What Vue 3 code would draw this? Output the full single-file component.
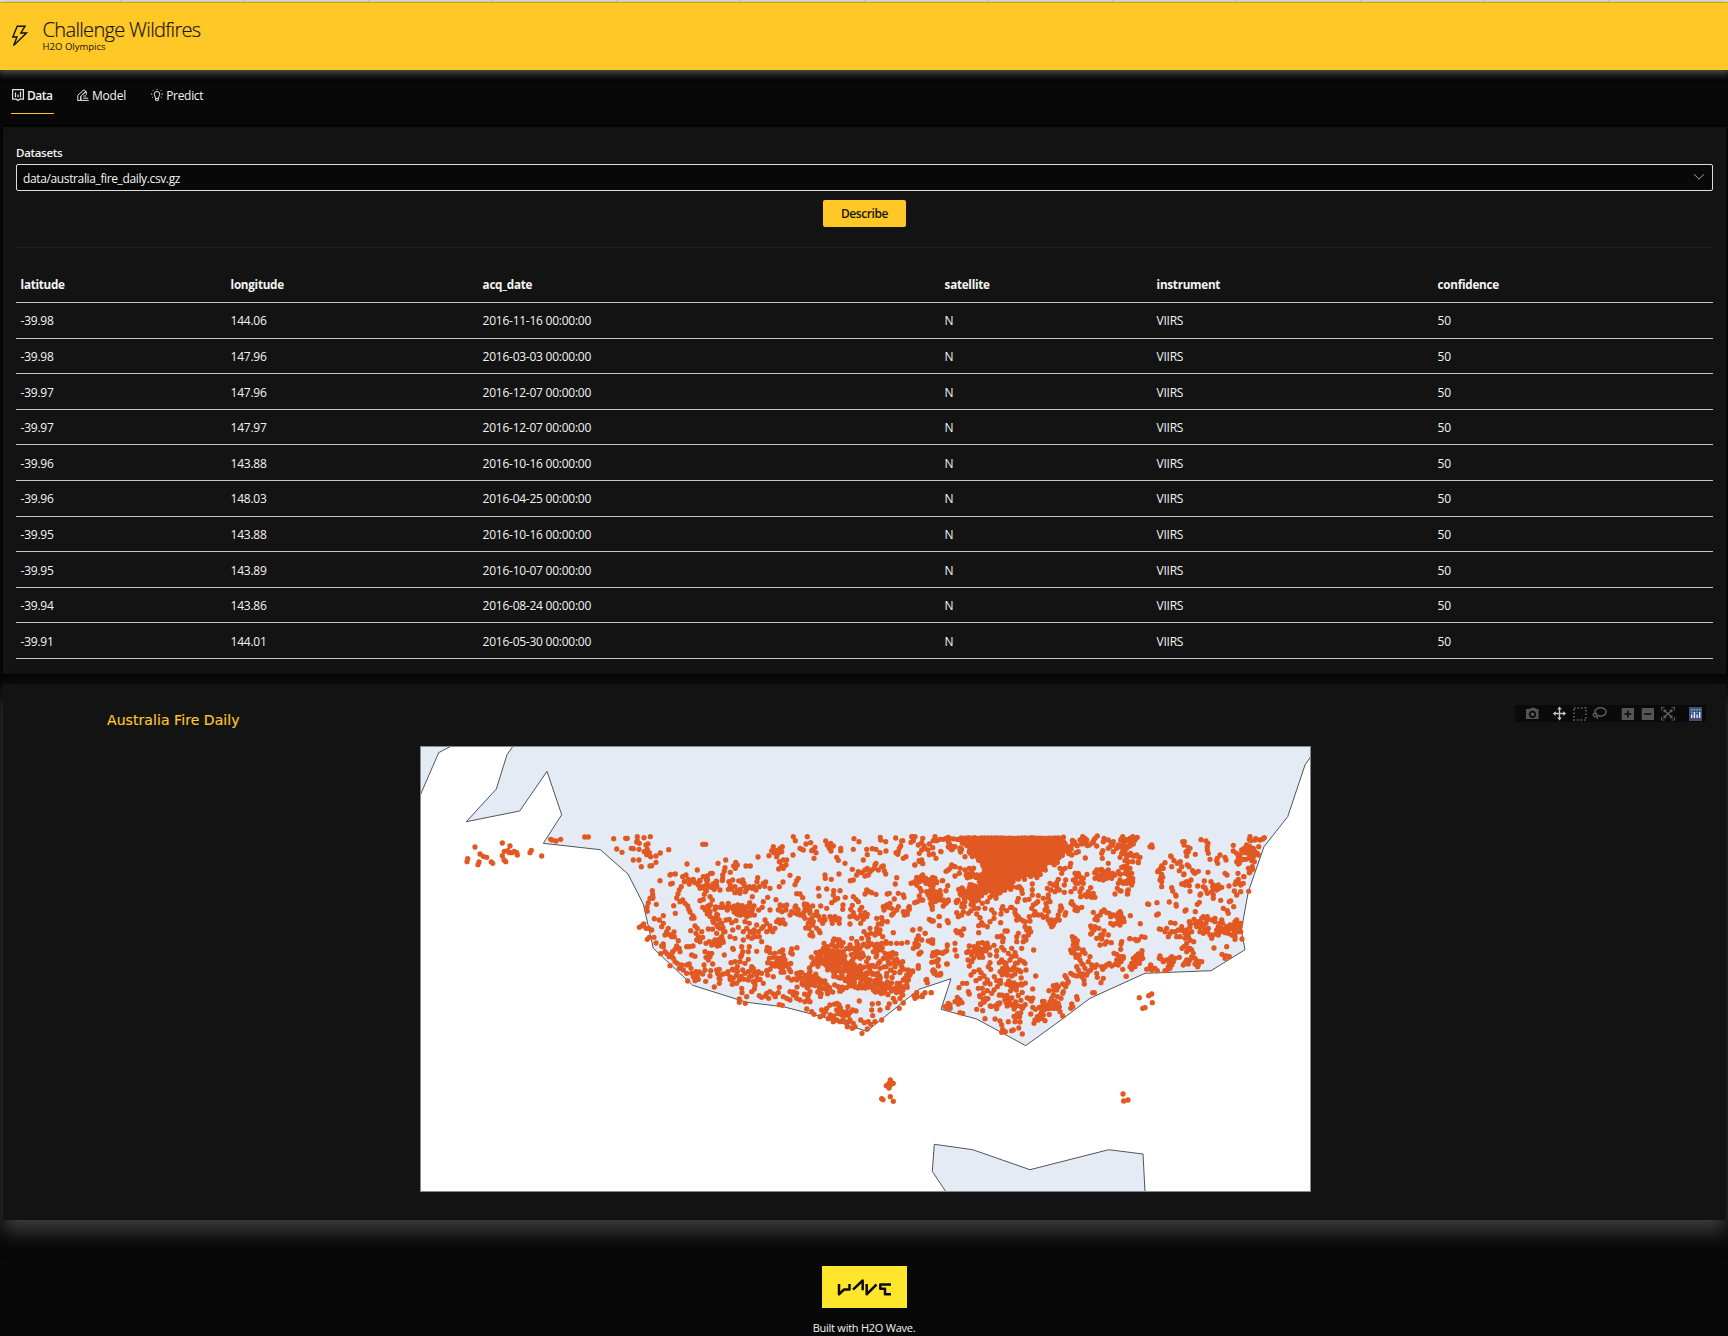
<script setup>
const tabs = [
  { name: 'Data', icon: 'data', active: true },
  { name: 'Model', icon: 'model' },
  { name: 'Predict', icon: 'predict' },
]
const columns = ['latitude', 'longitude', 'acq_date', 'satellite', 'instrument', 'confidence']
const rows = [
  ['-39.98', '144.06', '2016-11-16'],
  ['-39.98', '147.96', '2016-03-03'],
  ['-39.97', '147.96', '2016-12-07'],
  ['-39.97', '147.97', '2016-12-07'],
  ['-39.96', '143.88', '2016-10-16'],
  ['-39.96', '148.03', '2016-04-25'],
  ['-39.95', '143.88', '2016-10-16'],
  ['-39.95', '143.89', '2016-10-07'],
  ['-39.94', '143.86', '2016-08-24'],
  ['-39.91', '144.01', '2016-05-30'],
].map(([lat, lon, day]) => [lat, lon, `${day} 00:00:00`, 'N', 'VIIRS', '50'])

// Fire sites, grouped by map sector: each sector has an origin and positions in thirds of a pixel.
const sectors = [
  { x: 420, y: 740, p: `165,321 247,309 270,318 180,342 190,349 200,352 143,356 141,365 177,366 174,374 214,366 218,370 247,347 253,334 263,332 268,338 275,338 283,334 290,338 292,345 252,360 257,365 334,331 330,338 365,348 392,298 396,300 408,303 422,298 494,291 505,291 581,296 590,327 606,337` },
  { x: 620, y: 820, p: `6,97 17,55 22,55 34,85 40,86 40,120 52,50 52,62 58,70 72,53 91,50 78,75 84,72 57,88 50,66 57,120 64,140 73,95 82,88 80,104 88,98 92,110 108,108 121,99 108,127 95,137 90,138 146,89 248,73 257,73 201,132 120,182 153,163 166,162 150,165 157,190 152,192 232,150
188,170 198,165 193,185 205,178 212,183 220,178 225,188 208,192 184,200 178,210 174,222 170,234 180,245 188,240 195,250 203,258 206,268 210,276 219,288 215,295 222,294 161,257 166,280
240,183 250,170 262,168 272,160 277,160 235,195 240,205 248,200 255,208 262,192 268,200 276,203 283,208 290,198 300,210 294,130 317,120 315,143 313,153 308,165 308,175 290,185 331,157 341,138 347,127 352,135 346,145 378,138 391,138 414,111 338,180 345,200 352,212 361,208 368,180 372,190 373,198 380,208 388,200 396,205 402,200 413,173 411,185 418,200 408,210 430,190 437,186 434,199 450,205 397,230 345,218 360,220 376,215 325,208
240,242 250,238 253,223 259,213 270,230 277,240 248,262 256,270 262,260 262,282 270,275 285,268 290,262 300,262 308,262 322,270 325,250 330,262 340,262 345,270 352,265 360,258 365,270 372,262 380,275 385,260 395,270 350,282 362,285 372,282 380,290 390,280 402,258 416,270 427,262 430,245 443,232 450,270 468,239 475,270 290,283 283,295 298,300 305,310 290,315 300,325 318,300 328,298 335,308 348,302 355,322 338,330 375,305 388,310 380,325 370,335 390,335 400,340 395,355 385,350 370,360 345,355 330,350 315,335 305,350 290,340
97,212 98,223 90,235 98,235 99,232 81,261 82,274 85,248 109,253 58,322 65,318 71,312 78,325 86,325 95,330 103,296 118,300 130,287 130,310 125,320 145,325 140,335 150,345 135,345 162,336 163,350 155,350 82,358 88,352 102,352 108,369 125,378 130,372 122,401 130,380 135,395 142,402 148,410 155,405 160,415 158,395 150,437 175,362 170,378 165,388 178,385 180,395 200,380 208,380 219,378 215,405 225,409 165,425 172,430 185,435 178,445 190,450 200,435 208,432 213,445 215,460 220,470 225,482 235,478 203,483 200,460 238,456 232,468 228,455 212,332 228,340 235,350 230,360 240,365 232,325 225,318 248,352 265,327 245,335 258,370 268,365 275,375 285,372 292,375 285,360 296,362 255,395 265,400 270,410 258,412 265,420 278,432 275,400 292,378 313,405 252,435 255,450 248,462 272,452 270,468 257,484 290,450 298,448 295,462 300,478 283,501 298,490 310,462 320,460 330,470 340,475 338,385 340,388 365,380 368,395 365,405 388,380 385,395 410,394 362,410 360,425 375,430 385,418 333,428 345,425 352,440 340,450 368,450 375,460 395,440 400,445 385,455 395,468 360,475 350,490 342,490 358,480 366,518 365,505 385,480 400,485 410,465 410,480 415,455 425,460 420,478 430,490 443,465 440,452 450,448 460,470 376,550 358,537 358,547 380,530 395,515 403,507 405,495 418,527 425,532 440,520 436,528 450,515 446,535 460,522 466,530 478,502 475,518 478,554 487,556
520,50 526,62 562,50 558,72 545,88 550,90 540,85 572,68 585,82 578,90 588,98 582,115 575,92 519,105 617,63 622,75 632,70 628,85 640,78 633,93 662,85 662,92 650,112 655,121 702,56 717,65 700,88 740,88 742,104 757,86 768,88 781,52 782,60 797,65 780,98 798,93 730,120 827,54 845,63 842,78 838,85 835,95 828,98 833,103 850,115 858,110 876,50 880,60 885,50 873,67 895,75 905,68 912,78 905,90 898,100 905,120 897,122 908,131 885,135 928,104 938,83 945,50 940,62 960,58 978,55 985,65 985,80 962,94
460,80 470,92 480,85 475,100 462,98 455,92 487,80 485,95 470,110 447,107 478,125 490,120 485,138 498,135 490,145 476,147 500,120 615,165 616,175 634,178 657,162 675,130 510,166 535,175 530,182 525,194 489,186 478,200 530,221 540,222 548,233 595,205 620,207 597,228 641,212 640,225 635,248 645,240 653,235 660,212 676,232 697,148 710,165 715,155 725,158 735,150 742,145 750,155 745,165 735,168 755,150 762,145 765,135 768,130 775,150 785,140 790,138 793,152 797,162 700,180 691,182 830,173 826,192 740,210 735,222 748,215 755,218 768,223 700,230 708,238 715,245 697,256 669,255 668,268 873,190 880,188 890,195 903,170 898,185 900,205 912,182 918,175 930,180 938,172 950,185 942,190 930,195 967,182 978,154 985,150 983,197
480,255 490,258 500,255 498,270 478,270 486,275 510,285 515,275 525,262 527,258 532,282 540,285 548,280 555,270 552,290 560,270 565,260 570,280 575,295 580,305 570,300 578,258 602,258 585,285 595,288 600,300 590,275 612,290 620,265 608,310 615,300 630,290 637,310 635,300 645,290 650,300 658,310 658,296 555,295 565,310 578,315 557,324 567,325 570,345 578,348 575,338 590,325 597,332 600,338 450,330 458,335 450,318 465,325 480,310 475,300 488,300 495,312 470,305 435,300 440,310 430,320 415,335 425,325 440,335 410,315 402,330 418,350 425,365 405,350 442,382 448,385 440,392 450,398 465,400 480,395 490,405 488,390 515,387 512,398 517,402 531,383 448,415 460,412 470,425 480,425 490,430 500,438 495,420 478,440 465,438 455,430 443,428 508,448 512,455 485,448
692,268 700,278 690,290 705,290 690,312 712,295 722,285 720,270 725,262 730,298 740,290 742,283 735,278 722,310 728,292 790,260 792,270 800,255 805,262 810,250 815,265 820,280 823,237 808,220 802,222 835,220 852,232 850,225 835,260 830,270 815,285 850,275 853,285 862,278 868,268 866,262 884,248 892,245 903,240 898,228 785,293 770,295 775,312 785,312 788,303 802,305 770,325 780,330 768,338 765,345 778,340 788,350 798,365 750,325 740,345 752,340 745,355 732,335 725,355 710,365 695,355 820,338
920,215 930,222 938,212 945,225 935,235 940,245 932,250 937,260 955,240 948,235 955,220 962,225 960,212 970,240 975,248 985,240 925,225 932,300 928,298 940,303 957,290 958,317 983,303 879,330 900,327 916,340 895,348 890,358 885,370 880,385 892,380 905,360 925,363 935,360 938,370 903,397 898,402 940,398 950,400 937,408 945,405 935,427 960,398 975,395 982,377 968,400 955,418 980,432 940,450 942,460 952,465 962,463 945,455 920,478 922,488 895,438 895,445 878,453 865,450 870,465 855,475 865,480 858,500 850,480
658,360 640,362 635,375 650,380 662,375 622,380 610,385 600,395 615,400 630,392 645,398 658,400 670,395 680,385 690,375 700,385 712,375 720,385 730,375 742,380 755,372 765,380 775,375 785,370 798,370 812,370 830,370 845,370 862,367 760,395 770,405 785,390 795,400 808,402 818,398 828,402 815,412 830,418 838,430 822,425 805,425 790,415 775,430 765,440 780,445 798,440 812,450 825,440 840,455 800,460
658,580 665,585 660,570 680,575 685,585 670,600 650,600 640,605 660,605 625,596 635,590 610,585 605,570 620,565 630,555 600,590 650,570 680,610 690,600 700,610 682,620 697,625 705,620 685,605 718,543 698,570 708,573 722,600 733,608 726,640 742,627 745,605 752,613 765,605 785,600 758,587 755,570 757,552 775,550 780,570 803,563 808,552 838,565 850,549 825,545 820,535 840,535 845,520 560,567 575,575 582,583 555,545 570,545 540,540 530,535 520,525 530,520 500,535 490,530 510,540 510,515 885,535 882,527 892,530 890,518 908,525 915,518 934,518` },
  { x: 900, y: 820, p: `35,50 42,50 40,62 8,62 10,115 18,110 55,75 65,68 72,78 65,90 58,100 68,55 68,130 60,125 44,135 84,90 75,85 100,102 108,115 88,72 105,50 110,62 123,95 130,58 145,52 148,70 155,85 165,80 180,90 140,153 150,145 155,135 165,140 180,145 195,110 208,145 165,168 178,160 195,150 34,190 48,182 50,172 68,165 70,178 78,190 85,188 95,178 105,175 110,188 128,182 100,195 64,213 84,222 90,212 98,205 105,215 100,225 110,230 90,235 95,245 95,258 97,268 105,245 115,240 120,225 125,240 138,212 130,258 138,250 145,243 44,248 60,240 68,240 12,232 10,275 20,275 28,268 28,260 22,283 90,300 95,303 118,290 118,317 142,302 145,308 170,278 175,290 185,285 190,275 172,338 168,332 185,345 180,335 191,327 38,330 60,327 75,340 55,348 50,360 45,372 40,385 55,375 85,363 95,368 98,360 62,397 57,402 98,405 105,402 110,395 120,398 132,397 142,375 140,392 165,370 165,390 170,408 115,438 105,425 113,422 142,432 98,453 102,460 110,465 120,465 122,460 55,437 55,445 38,455 20,465 15,480 25,478 20,495 22,502 5,440 12,448 8,425 5,515 8,525 78,480 82,488 45,532 42,527 52,530 50,518 67,530 75,518 93,518
205,280 213,272 225,265 230,282 240,293 245,308 235,265 247,250 262,245 270,232 280,225 288,235 255,265 275,270 283,280 282,295 270,305 262,320 250,315 236,317 236,338 303,282 305,268 308,260 302,308 320,272 332,262 335,262 345,270 348,285 355,290 362,298 350,300 370,303 345,278 375,305 388,290 390,303 352,245 355,235 367,220 365,210 350,202 362,205 358,200 375,240 387,238 397,192 397,209 397,225 415,227 400,255 408,250 395,265 405,275 402,285 413,245 430,235 445,225 445,235 450,245 438,250 440,262 435,270 445,275 425,285 415,285 430,292 440,290 445,300 450,310 455,320 460,315 465,305 470,298 478,300 475,285 455,300 480,272 485,265 482,258 497,278 495,285 513,250 520,255 528,262 535,265 545,262 515,245 525,270 532,272
450,190 442,205 452,210 460,195 470,188 475,178 470,200 478,210 465,215 480,145 490,148 485,160 495,145 497,180 493,195 493,217 513,215 512,130 510,140 525,205 527,190 520,180 530,170 535,160 540,170 545,180 535,190 550,175 550,190 545,205 540,215 542,230 555,225 565,215 570,225 580,220 572,203 585,232 575,232 560,230 561,163 525,160 528,185
540,60 545,72 550,65 555,55 560,75 560,60 568,75 575,70 548,50 580,65 585,55 592,48 590,78 530,75 535,95 528,98 515,105 556,114 605,100 608,92 607,115 612,55 610,65 625,60 635,70 630,80 640,65 638,75 625,85 650,85 655,75 660,80 662,60 668,50 670,70 680,60 690,55 698,50 705,60 712,52 700,70 690,78 680,85 675,95 665,100 660,112 668,95 685,105 692,100 700,108 710,108 715,125 625,130 640,95 584,158 585,175 592,165 598,178 600,150 605,165 612,155 610,180 618,165 625,150 630,165 638,160 635,175 645,165 620,175 605,148 590,150 655,155 661,163 665,142 675,145 680,155 685,165 690,175 697,180 693,190 688,185 698,185 690,145 682,148 695,160 660,180 655,190 670,190 652,205 660,212 645,222 683,212 683,222
580,277 590,290 600,285 605,275 612,270 620,278 628,280 632,290 640,285 650,290 655,280 660,275 665,290 670,298 662,305 655,302 648,310 640,315 632,310 592,300 585,298 660,315 672,305 691,287 572,318 575,325 585,320 582,330 575,340 572,342 597,325 612,333 590,355 602,345 608,345 605,357 625,345 615,372 620,365 600,375 634,368 663,373 662,388 689,356 705,358 715,360
517,350 520,360 525,355 532,362 530,372 520,375 525,380 512,390 515,398 522,395 535,385 525,402 528,412 538,405 550,390 548,393 555,400 540,420 545,430 550,435 530,440 535,450 540,460 530,468 520,465 512,460 545,470 550,462 560,465 565,455 572,450 555,445 565,425 570,410 575,435 585,442 590,435 605,440 608,448 590,460 592,472 610,475 603,488 553,492 552,480 615,440 620,435 628,430 635,438 645,433 655,435 668,448 642,400 650,403 658,410 668,412 660,422 650,420 670,410 690,440 695,430 705,425 700,415 708,408 715,402 712,418 705,440 679,469
495,467 500,475 502,490 488,492 497,500 505,485 475,500 470,495 460,497 462,510 470,510 488,520 490,515 483,535 472,530 460,525 447,512 455,535 465,545 475,550 450,545 445,555 440,565 430,570 435,555 425,575 420,585 412,590 405,600 402,610 415,600 425,595 435,602 430,585 460,560 470,565 480,575 488,588 478,560 465,555 530,530 532,538 515,552 518,560 512,565 578,518 583,518 401,390 407,468 365,385 370,365 378,360 372,350 355,340 350,350 350,365 380,330 388,325 392,335 375,320 385,345 322,333 315,333 300,350 305,348 310,355 292,350 308,365
208,378 222,380 235,370 247,368 262,372 282,376 225,392 238,390 250,388 245,400 232,405 215,405 204,420 215,425 208,438 220,415 238,412 248,412 270,405 290,392 305,382 312,390 325,400 345,398 348,408 335,410 270,428 265,440 272,448 298,428 305,420 318,430 330,420 320,442 308,445 300,455 315,455 328,450 340,445 352,450 360,420 370,425 375,430 378,450 362,455 345,462 335,468 322,465 222,455 213,465 237,450 243,458 252,468 240,475 228,482 262,480 255,490 270,492 283,470 290,482 300,490 292,500 282,510 205,515 208,522 188,490 200,490 177,503 235,505 247,505 262,512 275,520 250,520 240,530 258,535 305,637 308,628 316,635 335,632 340,630 356,624 367,642 305,615 300,603 285,597 255,596 230,568 248,572 325,605 345,605 360,606 135,560 142,565 150,555 145,550 165,545 172,532 180,540 186,548 175,552 180,578 188,580` },
  { x: 1120, y: 740, p: `95,315 97,322 90,320 193,305 192,315 188,305 205,322 210,325 198,335 200,348 205,335 226,343 243,299 258,303 264,310 262,320 265,340 262,330 270,358 300,345 292,355 290,362 293,370 315,352 318,360 340,316 340,333 350,340 360,345 355,352 365,330 372,325 380,315 375,338 385,330 390,320 388,345 398,335 400,325 405,335 412,340 415,345 416,320 390,290 392,302 388,298 407,296 405,300 420,300 428,297 433,293 365,360 355,372 358,370 350,365 370,358 378,358 390,355 400,350 395,362 403,365 397,380 398,388 385,385 388,398 390,395 354,400 371,410 372,410 355,418 348,425 345,433 358,430 362,435 370,430 327,438 343,453 350,465 362,455 386,454
154,350 152,348 162,362 155,380 135,368 125,378 122,385 120,388 113,395 115,392 130,385 125,403 123,412 128,412 125,425 120,420 125,440 181,365 172,370 185,380 178,392 202,375 207,380 191,404 192,402 218,392 225,400 235,394 222,398 264,397 213,420 205,430 200,425 195,435 185,432 208,437 192,430 210,454 233,438 253,423 250,440 258,450 262,460 240,465 242,462 255,443 273,425 280,435 290,440 298,445 305,442 295,435 285,445 275,455 280,465 280,475 278,440 290,450 315,400 321,405 155,443 158,453 167,465 168,468 148,486 168,493 169,498 111,488 83,492 86,493 110,525 115,522 61,551 31,527 238,487 232,493 302,481 328,485 332,483 341,500 310,505 322,512 325,520 226,515 195,513 198,510
118,567 122,568 140,565 135,575 152,548 165,550 155,575 145,590 150,580 165,575 175,570 170,590 180,570 185,560 190,572 180,590 195,580 200,570 210,560 205,580 215,575 205,590 195,595 200,610 210,600 221,605 208,545 210,552 222,538 225,550 235,545 240,560 230,560 245,535 250,530 260,540 258,550 250,560 255,570 262,575 270,585 275,595 280,585 262,530 275,540 285,535 285,545 245,550 240,575 250,580 265,565 290,570 295,560 300,550 305,540 308,550 305,565 300,575 295,585 290,580 312,570 320,560 325,570 315,578 325,580 330,555 335,565 340,555 345,545 350,540 352,550 348,560 342,570 335,585 345,580 350,575 360,560 362,575 358,575 362,550 345,598 345,590 366,597 186,625 192,620 205,625 210,625 200,635 215,630 282,624 320,620 306,643 318,648 325,650 315,655 328,650 220,640 215,650 225,655 230,662 240,665 235,675 225,672 233,680 245,665 210,660 200,660 195,668 190,675 205,672 120,648 125,658 118,655 130,665 140,660 150,655 155,650 165,655 178,652 160,665 148,668 155,675 150,685 140,690 135,692 145,680 92,675 88,685 80,688 100,685 95,690 112,692 105,685 66,632 65,642 55,645 50,650 68,655 60,660 45,660 40,655 50,670 38,670 35,680 45,675 35,688 58,670 30,596 45,598 50,602 65,590 75,592 5,605 2,628 5,650 10,655 3,665 18,709 5,545 8,540 2,520 10,535 5,295 15,298 25,302 12,310 30,295 38,305 50,293 40,312 30,315 8,325 20,320 10,340 20,350 30,345 42,348 50,345 60,352 25,365 15,362 38,365 55,368 10,380 20,378 30,385 25,395 15,400 28,405 38,415 35,425 25,420 20,430 35,435 15,425 25,450 22,462 3,453 58,773 86,767 95,762 97,788 68,805 75,803` },
  { x: 820, y: 1050, p: `211,90 213,97 220,100 207,100 199,107 210,107 207,114 185,146 189,149 211,140 220,154 909,132 911,153 924,150` },
]
const dots = sectors.flatMap((s) =>
  s.p.trim().split(/\s+/).map((t) => {
    const [a, b] = t.split(',').map(Number)
    return [s.x + a / 3, s.y + b / 3]
  }),
)

// Crowded sites: centre, radii and count of each cluster.
const clusters = [
  [829, 960, 20, 10, 76], [850, 966, 24, 14, 82], [864, 980, 18, 9, 66], [888, 988, 16, 7, 50],
  [804, 977, 16, 11, 28], [783, 964, 12, 9, 16], [870, 949, 16, 10, 18], [838, 945, 16, 7, 12],
  [826, 984, 26, 10, 34], [812, 993, 26, 9, 20], [838, 1012, 14, 9, 16], [888, 967, 14, 11, 12],
  [745, 910, 14, 8, 18], [718, 932, 10, 14, 12], [738, 976, 22, 10, 14], [720, 884, 28, 6, 14],
  [1008, 975, 18, 14, 14], [1016, 994, 22, 14, 34], [980, 953, 14, 12, 10], [1010, 1008, 20, 12, 20],
  [992, 998, 16, 10, 12], [1040, 1008, 18, 9, 18], [994, 952, 20, 10, 6], [948, 1006, 5, 3, 3],
  [962, 846, 14, 7, 22], [966, 897, 11, 11, 42], [974, 880, 9, 12, 26], [1028, 864, 30, 8, 20],
  [1060, 848, 14, 8, 20], [1080, 843, 18, 5, 8], [723, 912, 20, 12, 12], [812, 912, 20, 10, 8],
]
let seed = 20160
const rand = () => (seed = (seed * 16807) % 2147483647) / 2147483647
for (const [cx, cy, rx, ry, n] of clusters) {
  for (let i = 0; i < n; i++) {
    const a = rand() * Math.PI * 2
    const r = Math.sqrt(rand())
    dots.push([cx + Math.cos(a) * r * rx, Math.max(837.5, cy + Math.sin(a) * r * ry)])
  }
}
const core = [[968, 838], [1065, 838], [1068, 850], [1053, 860], [1036, 877], [1018, 877], [1010, 888], [1000, 893], [984, 893], [974, 901], [978, 884], [985, 868], [976, 860], [971, 849]]
core.forEach(([x, y], i) => {
  const [u, v] = core[(i + 1) % core.length]
  const n = Math.ceil(Math.hypot(u - x, v - y) / 3.4)
  for (let k = 0; k < n; k++) {
    const j = y === 838 && v === 838 ? 0.6 : 5
    dots.push([x + ((u - x) * k) / n + (rand() - 0.5) * j, y + ((v - y) * k) / n + (rand() - 0.5) * j])
  }
})
for (let x = 950; x < 970; x += 3.7) dots.push([x, 837.5 + rand() * 2])
const fires = dots.map(([x, y]) => `M${x.toFixed(1)} ${y.toFixed(1)}h.01`).join('')
const corePath = 'M' + core.map((c) => c.join(' ')).join('L') + 'Z'
</script>

<template>
  <div class="page">
    <div class="strip"></div>
    <header class="header">
      <svg class="bolt" width="18" height="22" viewBox="0 0 18 22"><path d="M6.2 1.2H14L9.9 8h5.6L2.6 20.4 6 12H1.8z" fill="none" stroke="#111" stroke-width="1.4" /></svg>
      <div>
        <h1>Challenge Wildfires</h1>
        <p>H2O Olympics</p>
      </div>
    </header>
    <nav class="tabs">
      <div v-for="t in tabs" :key="t.name" class="tab" :class="[t.icon, { active: t.active }]">
        <svg width="12" height="12" viewBox="0 0 12 12" fill="none" stroke="#e4e4e4" stroke-width="1">
          <path v-if="t.icon === 'data'" d="M4.5 10.2H.6V.6h10.8v9.6H7.5L6 11.6zM3.5 3.5v4.8M6 5.5v2.8M8.5 2.5v5.8" stroke-width="1.2" />
          <path v-else-if="t.icon === 'model'" d="M.8 11.4V6.2L7 .8l1.8 1.5-5 4.6v4.5M.3 11.4h11.4M6.3 5l3-2.5v3.4M6.2 7h3M6.2 9.2h5M3.8 11V7.5" />
          <path v-else d="M4.6 9.2C4.6 7.5 3.2 7 3.2 5.3a2.8 2.8 0 0 1 5.6 0c0 1.7-1.4 2.2-1.4 3.9v2.1H4.6zM4.6 9.4h2.8M6 .2v1M1.8 1.3l.8.8M10.2 1.3l-.8.8M0 5h1.3M10.7 5H12M1.3 8.6l.9-.7M10.7 8.6l-.9-.7" />
        </svg>
        <span>{{ t.name }}</span>
      </div>
    </nav>
    <main>
      <section class="panel data-panel">
        <label>Datasets</label>
        <div class="select">
          <span>data/australia_fire_daily.csv.gz</span>
          <svg width="12" height="8" viewBox="0 0 12 8"><path d="M1 1.2l5 5 5-5" fill="none" stroke="#aaa" /></svg>
        </div>
        <button>Describe</button>
        <hr />
        <table>
          <thead><tr><th v-for="c in columns" :key="c">{{ c }}</th></tr></thead>
          <tbody>
            <tr v-for="(r, i) in rows" :key="i"><td v-for="(v, j) in r" :key="j">{{ v }}</td></tr>
          </tbody>
        </table>
      </section>
      <section class="panel chart-panel">
        <div class="chart-head">
          <h2>Australia Fire Daily</h2>
          <div class="modebar">
            <svg width="191" height="17" viewBox="0 0 191 17">
              <path fill="#555" fill-rule="evenodd" d="M12 4h3l1-1.3h4L21 4h2.5v10H11V4zM17.5 5.6a3.7 3.7 0 1 0 .01 0zM17.5 7.4a1.9 1.9 0 1 1-.01 0z" />
              <path stroke="#c4c4c4" stroke-width="1.3" fill="none" d="M44.5 3v11M39 8.5h11" />
              <path fill="#c4c4c4" d="M44.5 1.5l2.3 3h-4.6zM44.5 15.5l2.3-3h-4.6zM37.8 8.5l3-2.3v4.6zM51.2 8.5l-3-2.3v4.6z" />
              <rect x="59" y="3" width="12" height="12" fill="none" stroke="#666" stroke-width="1.6" stroke-dasharray="1.6 1.9" />
              <ellipse cx="85.5" cy="7" rx="5.7" ry="4.2" fill="none" stroke="#5c5c5c" stroke-width="1.5" />
              <path d="M82 9a2 2 0 1 0-.7 2.6c1.3-.3 2 .8.8 2.4" fill="none" stroke="#5c5c5c" stroke-width="1.3" />
              <path fill="#555" fill-rule="evenodd" d="M106.7 3H119v12h-12.3zM112 5.5v2.7h-2.7v1.5h2.7v2.7h1.6V9.7h2.7V8.2h-2.7V5.5z" />
              <path fill="#555" fill-rule="evenodd" d="M126.7 3H139v12h-12.3zM129.3 8.2v1.6h7V8.2z" />
              <path fill="none" stroke="#555" stroke-width="1.2" d="M146.6 5.5v-3h3M156.5 2.5h3v3M159.5 12v3h-3M149.6 15h-3v-3" />
              <path fill="none" stroke="#5c5c5c" stroke-width="1.5" d="M149.5 5.5l7 6.5M156.5 5.5l-7 6.5M149.2 7.2V5.2h2M156.8 7.2V5.2h-2M149.2 10.4v2h2M156.8 10.4v2h-2" />
              <rect x="174" y="2" width="13" height="14" fill="#3f4f7c" />
              <path stroke="#79c3bd" stroke-width="1.4" stroke-dasharray="1.4 1.3" d="M176.7 4v4M179.4 4v2M182.1 4v4M184.7 4v2" />
              <path stroke="#eef" stroke-width="1.4" d="M176.7 9.5V13M179.4 7V13M182.1 9.5V13M184.7 7V13" />
            </svg>
          </div>
        </div>
        <svg class="map" width="891" height="446" viewBox="420 746 891 446">
          <rect x="420" y="746" width="891" height="446" fill="#fff" />
          <g fill="#e5ebf5" stroke="#50545a" stroke-width="1">
            <path d="M419 740L419 798 438.7 752.7 450 746.7 460 740z" />
            <path d="M516 742L507 754.7 496.3 789 466.3 821.7 519.7 811 547 771.3 561.7 814.7 543.3 843.3 600.3 849.7 628 874 643.3 904 653.3 948.3 692.7 985.3 746.7 1002.3 783.3 1006.7 823 1017 866.7 1031.3 919 989.3 951 978.7 941 1009.3 976.7 1019 1025.7 1045.7 1063.3 1018.3 1090 998.3 1145 973.3 1211 970.7 1245 949.7 1241.3 930 1248.3 891.7 1264 846.7 1287.7 816.7 1305 765 1314 752V740z" />
            <path d="M948 1195L932.3 1171.3 934.3 1144.3 972.7 1149.7 1030 1169.7 1108.7 1149.7 1143 1154 1145.2 1195z" />
          </g>
          <path :d="corePath" fill="#e25822" />
          <path :d="fires" stroke="#e25822" stroke-width="5.3" stroke-linecap="round" fill="none" />
          <rect x="420.5" y="746.5" width="890" height="445" fill="none" stroke="#85898d" stroke-width="1" />
        </svg>
      </section>
    </main>
    <footer>
      <svg width="85" height="42" viewBox="0 0 85 42">
        <rect width="85" height="42" fill="#ffe52b" />
        <path d="M17 18v10.3l5-4.800h5.500V18M31 23.700l9.700-9.200v9.800M44.700 18v10.300L54.500 18.500M69 18.500H58.300v4.200H63v5.600h6" fill="none" stroke="#0c0c04" stroke-width="2.5" stroke-linejoin="round" />
      </svg>
      <p>Built with H2O Wave.</p>
    </footer>
  </div>
</template>

<style>
body { margin: 0; background: #080808; }
</style>
<style scoped>
.page { width: 1728px; height: 1336px; overflow: hidden; background: #080808; color: #f3f3f3; font-family: "Open Sans", "Noto Sans", sans-serif; font-size: 12px; }
h1, h2, p { margin: 0; }
.strip { height: 2px; background: repeating-linear-gradient(90deg, #e9e9e9 0 120px, #cfcfcf 120px 121px, #e9e9e9 121px 124px); }
.header { box-sizing: border-box; height: 68px; border-top: 1px solid #d9a200; background: #ffc826; color: #171510; display: flex; align-items: flex-start; gap: 13px; padding: 15px 0 0 11px; position: relative; box-shadow: 0 3px 6px 1px #484848; }
.bolt { margin-top: 7px; }
.header > div { margin-left: 0.6px; }
h1 { font-size: 20px; line-height: 24px; font-weight: 300; letter-spacing: -0.67px; white-space: nowrap; -webkit-text-stroke: 0.2px #171510; }
.header p { font-size: 9.5px; line-height: 11px; letter-spacing: 0; margin-top: -1px; }
.tabs { height: 57px; display: flex; }
.tab { box-sizing: border-box; height: 44px; display: flex; align-items: flex-start; padding-top: 18px; gap: 3px; font-size: 12px; line-height: 16px; letter-spacing: -0.2px; }
.tab svg { margin-top: 1px; flex: none; }
.tab.data { margin-left: 11px; width: 43px; padding-left: 1px; border-bottom: 1px solid #ffc826; letter-spacing: -0.5px; }
.tab.model { margin-left: 23px; }
.tab.predict { margin-left: 25px; letter-spacing: -0.3px; }
.active { font-weight: 600; }
main { padding: 0 2px 0 3px; display: flex; flex-direction: column; gap: 10px; }
.panel { box-sizing: border-box; background: #131313; }
.data-panel { height: 547px; padding: 18px 13px 0; display: flex; flex-direction: column; box-shadow: 0 0 5px #000; }
label { font-weight: 600; font-size: 11.5px; line-height: 16px; letter-spacing: -0.3px; }
.select { box-sizing: border-box; height: 27px; margin-top: 3px; border: 1px solid #ddd; border-radius: 2px; background: #080808; display: flex; align-items: center; justify-content: space-between; padding: 2px 7px 0 6px; font-size: 12px; letter-spacing: -0.37px; }
.select svg { margin-top: -4px; }
button { font: 600 12px "Open Sans", sans-serif; letter-spacing: -0.4px; align-self: center; width: 83px; height: 27px; margin-top: 9px; padding: 0; border: 0; border-radius: 2px; background: #ffc826; color: #15130c; }
hr { width: 100%; border: 0; height: 1px; background: #1f1f1f; margin: 20px 0 19px; }
table { border-collapse: collapse; table-layout: fixed; width: 1697px; }
th, td { box-sizing: border-box; height: 35.6px; padding: 2px 0 0 5px; text-align: left; border-bottom: 1px solid #c4c8c5; line-height: 16px; }
th { font-weight: 700; font-size: 11.7px; letter-spacing: -0.27px; padding: 0 0 1px 4.600px; }
td { font-size: 12px; letter-spacing: -0.25px; padding-left: 4.600px; }
th:nth-child(1) { width: 210px; }
th:nth-child(2) { width: 252px; }
th:nth-child(3) { width: 462px; }
th:nth-child(4) { width: 212px; }
th:nth-child(5) { width: 281px; }
.chart-panel { height: 536px; box-shadow: 0 12px 18px 0 #3c3c3c; display: flex; flex-direction: column; }
.chart-head { height: 62px; display: flex; justify-content: space-between; align-items: flex-start; }
h2 { margin: 26px 0 0 104px; font: 400 14px/20px "DejaVu Sans", sans-serif; letter-spacing: 0.07px; color: #ffc826; -webkit-text-stroke: 0.15px #ffc826; }
.modebar { margin: 21px 20px 0 0; width: 191px; height: 17px; background: #0a0a0a; }
.map { margin-left: 417px; display: block; }
footer { display: flex; flex-direction: column; align-items: center; padding-top: 46px; font-size: 11px; letter-spacing: -0.25px; }
footer p { line-height: 16px; margin-top: 12px; }
svg { display: block; }
</style>
